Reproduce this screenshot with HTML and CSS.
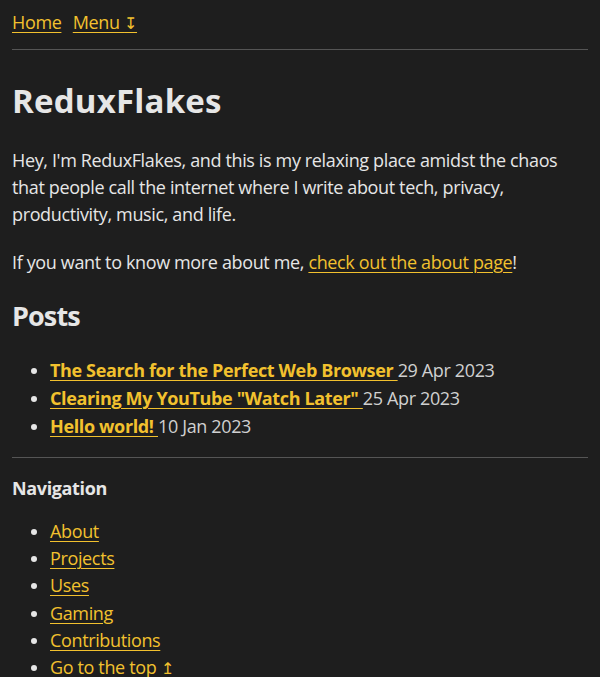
FILE: index.html
```html
<!DOCTYPE html>
<html lang="en">
<head>
<meta charset="utf-8">
<title>ReduxFlakes</title>
<link rel="stylesheet" href="styles.css">
</head>
<body>
<header class="top">
  <nav class="topnav"><a href="#">Home</a> <a href="#">Menu <span class="arrow">↧</span></a></nav>
  <hr class="rule">
</header>
<main>
  <h1 class="title">ReduxFlakes</h1>
  <p class="para">Hey, I'm ReduxFlakes, and this is my relaxing place amidst the chaos that people call the internet where I write about tech, privacy, productivity, music, and life.</p>
  <p class="para">If you want to know more about me, <a href="#">check out the about page</a>!</p>
  <h2 class="subtitle">Posts</h2>
  <ul class="list posts">
    <li><a class="post" href="#">The Search for the Perfect Web Browser </a><span class="date">29 Apr 2023</span></li>
    <li><a class="post" href="#">Clearing My YouTube "Watch Later" </a><span class="date">25 Apr 2023</span></li>
    <li><a class="post" href="#">Hello world! </a><span class="date">10 Jan 2023</span></li>
  </ul>
</main>
<footer>
  <hr class="rule">
  <h3 class="navtitle">Navigation</h3>
  <ul class="list">
    <li><a href="#">About</a></li>
    <li><a href="#">Projects</a></li>
    <li><a href="#">Uses</a></li>
    <li><a href="#">Gaming</a></li>
    <li><a href="#">Contributions</a></li>
    <li><a href="#">Go to the top <span class="arrow">↥</span></a></li>
  </ul>
</footer>
</body>
</html>
```
FILE: styles.css
```css
html { background: #1e1e1e; }
body {
  margin: 0;
  padding: 0 12px;
  background: #1e1e1e;
  color: #e6e6e6;
  font-family: "Open Sans", "Noto Sans", sans-serif;
  font-size: 18px;
  line-height: 1.5;
  letter-spacing: -0.36px;
}
a { color: #f2c12e; text-decoration: underline; text-underline-offset: 3px; text-decoration-thickness: 1px; }
.arrow { font-size: 16px; letter-spacing: 0; }
.topnav { padding-top: 9px; height: 27px; }
.topnav a { margin-right: 7px; }
.rule { border: 0; border-top: 1px solid #555; margin: 13px 0 0; }
.title { font-size: 33px; margin: 31px 0 26px; line-height: 1.2; font-weight: 700; letter-spacing: 0.2px; }
.para { margin: 0 0 21px; }
.subtitle { font-size: 27px; margin: 24px 0 24px; line-height: 1.2; letter-spacing: -0.9px; }
.list { margin: 0 0 17px; padding-left: 38px; }
.posts li { line-height: 28px; }
.post { font-weight: 700; }
.date { color: #d0d0d0; }
.navtitle { font-size: 18px; margin: 17px 0 16px; }
.list:not(.posts) li { line-height: 27.2px; }
```
